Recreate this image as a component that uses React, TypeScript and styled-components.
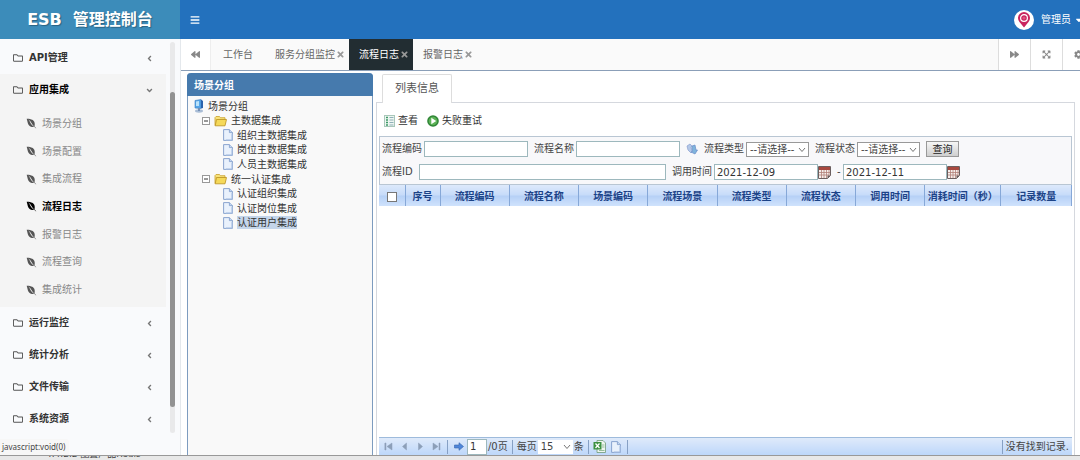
import React from 'react';
import styled, { createGlobalStyle, css } from 'styled-components';
import {
  FaAngleDown,
  FaAngleLeft,
  FaBackward,
  FaBars,
  FaCaretDown,
  FaCog,
  FaEnvira,
  FaExpandArrowsAlt,
  FaForward,
  FaRegFolder,
  FaTimes,
} from 'react-icons/fa';

const GlobalStyle = createGlobalStyle`
  * { box-sizing: border-box; }
  body {
    margin: 0;
    overflow: hidden;
    background: #fff;
    color: #444;
    font: 10px/14px "DejaVu Sans", "Noto Sans CJK SC", sans-serif;
  }
  button, input, select { font: inherit; color: inherit; margin: 0; }
  button { border: 0; padding: 0; background: none; cursor: pointer; }
  a { color: inherit; text-decoration: none; }
  ul { list-style: none; margin: 0; padding: 0; }
  svg { display: block; flex: none; }
`;

const Page = styled.div`
  display: flex;
  flex-direction: column;
  height: 100vh;
`;

/* ---------- header ---------- */

const Header = styled.header`
  display: flex;
  flex: none;
  height: 39px;
  overflow: hidden;
  background: #2371bd;
  color: #fff;
`;

const Brand = styled.h1`
  display: flex;
  align-items: center;
  justify-content: center;
  gap: 11px;
  width: 180px;
  margin: 0;
  background: #3c8cba;
  font-size: 16px;
  line-height: 24px;
  font-weight: 700;
  text-shadow: 1px 1px 1px rgba(0, 0, 0, 0.3);
`;

const MenuToggle = styled.button`
  padding: 0 10px;
`;

const UserMenu = styled.button`
  display: flex;
  align-items: center;
  gap: 7px;
  margin: 0 -4px 0 auto;
  white-space: nowrap;
`;

const UserName = styled.span`
  display: flex;
  align-items: center;
  gap: 3px;
`;

/* ---------- sidebar ---------- */

const Body = styled.div`
  display: flex;
  flex: 1;
  min-height: 0;
`;

const Sidebar = styled.aside`
  position: relative;
  display: flex;
  flex: none;
  width: 181px;
  padding-top: 3px;
  background: #f9fafc;
  border-right: 1px solid #e4e8ec;
`;

const Nav = styled.nav`
  width: 166px;
`;

const Group = styled.div<{ $open?: boolean }>`
  background: ${p => (p.$open ? '#f4f4f4' : 'transparent')};
  color: ${p => (p.$open ? '#000' : '#333')};
  padding-bottom: ${p => (p.$open ? 3 : 0)}px;
`;

const GroupLink = styled.a`
  display: flex;
  align-items: center;
  height: 32px;
  padding: 0 12px 0 13px;
  gap: 6px;
  font-weight: 700;

  svg:last-child {
    margin-left: auto;
    color: #777;
  }
`;

const SubMenu = styled.ul`
  display: grid;
  grid-auto-rows: 1fr;
  height: 198px;
  padding-top: 4px;
`;

const SubLink = styled.a<{ $active?: boolean }>`
  display: flex;
  align-items: center;
  gap: 5px;
  height: 100%;
  padding-left: 26px;
  color: ${p => (p.$active ? '#000' : '#888')};
  font-weight: ${p => (p.$active ? 700 : 400)};

  svg { color: ${p => (p.$active ? '#000' : '#555')}; }
`;

const ScrollTrack = styled.div`
  width: 5px;
  margin: 0 0 22px 4px;
  padding: 50px 0 26px;
  border-radius: 3px;
  background: #e9e9ea;
`;

const ScrollThumb = styled.div`
  height: 100%;
  border-radius: 3px;
  background: #929292;
`;

const LinkHint = styled.div`
  position: absolute;
  left: 0;
  bottom: 0;
  height: 16px;
  padding: 0 4px 0 2px;
  border-radius: 0 3px 0 0;
  background: #f7f7f7;
  color: #444;
  font: 8px/16px "Noto Sans", sans-serif;
`;

/* ---------- tab bar ---------- */

const Main = styled.main`
  display: flex;
  flex: 1;
  flex-direction: column;
  min-width: 0;
`;

const TabBar = styled.div`
  display: flex;
  flex: none;
  height: 32px;
  overflow: hidden;
  background: #fafafa;
  border-bottom: 1px solid #8b9fb8;
  color: #777;
`;

const BarButton = styled.button<{ $side: 'left' | 'right' }>`
  display: flex;
  flex: none;
  align-items: center;
  justify-content: center;
  width: ${p => (p.$side === 'left' ? 30 : 32)}px;
  background: #fff;
  color: #888;
  ${p => (p.$side === 'left' ? css`border-right: 1px solid #eee;` : css`border-left: 1px solid #ddd;`)}
`;

const BarEnd = styled.div`
  display: flex;
  flex: none;
  width: 82px;
  margin-left: auto;
  overflow: hidden;
`;

const Tab = styled.button<{ $active?: boolean }>`
  display: flex;
  align-items: center;
  gap: 1px;
  padding: 0 4px 0 10px;
  white-space: nowrap;
  background: ${p => (p.$active ? '#222d32' : 'transparent')};
  color: ${p => (p.$active ? '#fff' : '#666')};

  &:nth-child(2) { padding: 0 12px; }
  svg { color: #999; }
`;

/* ---------- tree panel ---------- */

const Workspace = styled.div`
  display: flex;
  flex: 1;
  gap: 3px;
  min-height: 0;
  padding: 2px 5px 0 6px;
`;

const TreePanel = styled.section`
  display: flex;
  flex: none;
  flex-direction: column;
  width: 186px;
  border: 1px solid #7d9cbf;
  border-width: 0 1px;
  border-radius: 4px 4px 0 0;
  background: #f9f9f9;
`;

const PanelTitle = styled.h2`
  flex: none;
  height: 23px;
  margin: 0 -1px 3px;
  padding: 0 7px;
  border-radius: 4px 4px 0 0;
  background: #467aad;
  color: #fff;
  font-size: 10px;
  line-height: 26px;
`;

const TreeList = styled.div`
  display: grid;
  grid-auto-rows: minmax(0, 1fr);
  height: 131px;
`;

const TreeRow = styled.div<{ $level: number }>`
  display: flex;
  align-items: center;
  padding-left: ${p => [5, 14, 35][p.$level]}px;
  gap: 4px;
`;

const TreeLabel = styled.span<{ $selected?: boolean }>`
  background: ${p => (p.$selected ? '#c4d5ea' : 'transparent')};
  line-height: 13px;
  color: #333;
`;

/* ---------- list panel ---------- */

const ListPanel = styled.section`
  display: flex;
  flex: 1;
  flex-direction: column;
  min-width: 0;
  padding-top: 1px;
`;

const PanelTab = styled.button`
  position: relative;
  flex: none;
  align-self: flex-start;
  height: 29px;
  margin: 0 0 -1px 6px;
  padding: 0 12px;
  border: 1px solid #ddd;
  border-bottom: 0;
  border-radius: 2px 2px 0 0;
  background: #fff;
  color: #555;
  font-size: 11px;
`;

const PanelBody = styled.div`
  display: flex;
  flex: 1;
  flex-direction: column;
  min-height: 0;
  padding: 0 2px;
  border: 1px solid #d5d8de;
  border-bottom: 0;
`;

const Toolbar = styled.div`
  display: flex;
  flex: none;
  align-items: center;
  gap: 9px;
  height: 33px;
  padding: 2px 5px 0;
`;

const ToolButton = styled.button`
  display: flex;
  align-items: center;
  gap: 3px;
  color: #333;
`;

const Filters = styled.form`
  display: flex;
  flex: none;
  flex-direction: column;
  gap: 7px;
  height: 49px;
  padding: 4px 2px 0;
  border: 1px solid #b9c6d3;
  background: #f8f8fa;
`;

const FilterRow = styled.div`
  display: flex;
  align-items: center;
  height: 16px;
  gap: 6px;
  white-space: nowrap;
`;

const Field = styled.div`
  display: flex;
  flex: none;
  align-items: center;
`;

const Label = styled.label<{ $wide?: number }>`
  width: ${p => p.$wide ?? 42}px;
  color: #444;
`;

const TextInput = styled.input<{ $width?: number }>`
  width: ${p => p.$width ?? 104}px;
  height: 16px;
  padding: 0 2px;
  border: 1px solid #9db8bd;
  background: #fff;
  color: #333;
`;

const SelectBox = styled.span<{ $plain?: boolean }>`
  display: grid;
  align-items: center;
  width: ${p => (p.$plain ? 35 : 63)}px;
  height: ${p => (p.$plain ? 14 : 15)}px;
  border: ${p => (p.$plain ? '0' : '1px solid #999')};
  background: #fff;

  select, svg { grid-area: 1 / 1; }
  select {
    width: 100%;
    height: 100%;
    padding: 0 0 0 3px;
    border: 0;
    background: none;
    appearance: none;
  }
  svg { justify-self: end; margin-right: 2px; pointer-events: none; }
`;

const IconButton = styled.button`
  display: flex;
  align-items: center;
`;

const QueryButton = styled.button`
  width: 33px;
  height: 16px;
  border: 1px solid #999;
  background: linear-gradient(#f6f6f6, #cfcfcf);
  line-height: 13px;
  color: #222;
`;

const Grid = styled.table`
  flex: none;
  width: 100%;
  table-layout: fixed;
  border-collapse: collapse;

  th {
    height: 21px;
    padding: 2px 0 0;
    border-right: 1px solid #86a8d8;
    background: linear-gradient(#dde9fb, #c6dbf9 48%, #b5d0f6 52%, #cfe2fc);
    color: #1c4388;
    white-space: nowrap;
  }
  input {
    display: block;
    appearance: none;
    width: 10px;
    height: 10px;
    margin: 0 auto;
    border: 1px solid #777;
    background: #fff;
  }
`;

const Pager = styled.footer`
  display: flex;
  flex: none;
  align-items: center;
  height: 18px;
  margin-top: auto;
  padding: 0 3px 0 1px;
  border-top: 1px solid #9ebbdc;
  background: linear-gradient(#dfeafa, #bdd7fa);
  white-space: nowrap;
`;

const PageButton = styled.button`
  display: grid;
  place-items: center;
  width: 16px;
  height: 14px;
`;

const Divider = styled.i`
  width: 1px;
  height: 14px;
  margin: 0 3px;
  background: #86a0c4;
`;

const PagerText = styled.label`
  margin: 0 1px;
`;

const PagerNote = styled.span`
  display: flex;
  align-items: center;
  margin-left: auto;
`;

/* strip of the window underneath */
const BottomStrip = styled.div`
  display: flex;
  flex: none;
  align-items: flex-end;
  height: 5px;
  padding-left: 46px;
  overflow: hidden;
  border-top: 1px solid #999;
  background: #e8e8e8;
  color: #444;
  font-size: 9px;
  line-height: 11px;
`;

/* ---------- drawings ---------- */

const PinAvatar = () => (
  <svg width="20" height="20" viewBox="0 0 20 20">
    <circle cx="10" cy="10" r="10" fill="#fff" />
    <path d="M10 17.500 5.500 12A6 6 0 1 1 14.500 12Z" fill="#c9245f" />
    <circle cx="10" cy="8" r="3.400" fill="none" stroke="#fff" strokeWidth="1.200" />
    <circle cx="10" cy="8" r="1.600" fill="#e2527f" />
  </svg>
);

const ServerIcon = () => (
  <svg width="11" height="14" viewBox="0 0 11 14">
    <path d="M2 1.500 8 .500v9L2 9Z" fill="#56a6e8" stroke="#3a7cc0" strokeWidth=".6" />
    <path d="M3 2.500 6 2v5L3 7Z" fill="#b9e2fb" />
    <path d="M8 .500 10 2v7L8 9.500Z" fill="#2b63ac" />
    <ellipse cx="6" cy="12" rx="4" ry="1.700" fill="#a9bdd6" />
    <path d="M5 9h2v3H5Z" fill="#7590b5" />
  </svg>
);

const MinusBox = () => (
  <svg width="8" height="8" viewBox="0 0 8 8">
    <rect x=".5" y=".5" width="7" height="7" fill="#fff" stroke="#999" />
    <path d="M2 4h4" stroke="#333" />
  </svg>
);

const OpenFolder = () => (
  <svg width="13" height="12" viewBox="0 0 13 12">
    <path d="M1 10.500V2.500L2 1.500h3.500l1 1.200H11V5" fill="#f7e27a" stroke="#c8a02c" strokeWidth=".8" />
    <path d="M1.200 10.800 2.500 4.500h10l-1.500 6.300Z" fill="#f5d95a" stroke="#b98f1e" strokeWidth=".8" />
  </svg>
);

const FileIcon = () => (
  <svg width="10" height="12" viewBox="0 0 10 12">
    <path d="M.6.600h5.800L9.400 3.600v7.800H.6Z" fill="#e9f1fc" stroke="#7f9cc9" strokeWidth=".9" />
    <path d="M6.400.600v3h3" fill="#c3d6f2" stroke="#7f9cc9" strokeWidth=".8" />
    <path d="M9 5v6H3" fill="none" stroke="#a9c0e4" />
  </svg>
);

const ListIcon = () => (
  <svg width="11" height="12" viewBox="0 0 11 12">
    <rect x=".5" y=".5" width="10" height="11" fill="#eef6f1" stroke="#a9c7ba" />
    <path d="M2 2.500h2M2 5h2M2 7.500h2M2 10h2" stroke="#3e9a68" strokeWidth="1.300" />
    <path d="M5.500 2.500h4M5.500 5h4M5.500 7.500h4M5.500 10h4" stroke="#8fb0b8" />
  </svg>
);

const PlayIcon = () => (
  <svg width="12" height="12" viewBox="0 0 12 12">
    <circle cx="6" cy="6" r="5.800" fill="#2f8536" />
    <circle cx="6" cy="6" r="4.300" fill="#5cb256" />
    <path d="M4.300 2.800 9.200 6 4.300 9.200Z" fill="#fff" />
  </svg>
);

const RefreshIcon = () => (
  <svg width="12" height="12" viewBox="0 0 12 12">
    <path d="M1 3 4 1l2 2-1 1 1 4-1 2-3-3Z" fill="#b4c8e8" stroke="#8a9fd0" strokeWidth=".7" />
    <path d="m6 3 3-1 1 5 1.500 0-2.500 4-4-2 1.500-.5Z" fill="#7fb4dc" stroke="#6a8cc8" strokeWidth=".7" />
  </svg>
);

const CalendarIcon = () => (
  <svg width="13" height="13" viewBox="0 0 13 13">
    <path d="M.5.500h12v9l-3 3h-9Z" fill="#f6efec" stroke="#6b5f5f" />
    <path d="M1 1h11v3H1Z" fill="#a8493f" />
    <path d="M1 6.500h11M1 9h10M3.500 4v8M6 4v8M8.500 4v8M11 4v6" stroke="#b28078" strokeWidth=".8" />
    <path d="M9.500 12.500v-3h3Z" fill="#6b5f5f" />
  </svg>
);

const Chevron = () => (
  <svg width="8" height="6" viewBox="0 0 8 6">
    <path d="m1 1 3 3.500L7 1" fill="none" stroke="#666" strokeWidth=".9" />
  </svg>
);

const NavGlyph = ({ d }: { d: string }) => (
  <svg width="9" height="9" viewBox="0 0 9 9">
    <path d={d} fill="#8c9fb8" stroke="#8c9fb8" strokeWidth=".5" />
  </svg>
);

const GoArrow = () => (
  <svg width="10" height="9" viewBox="0 0 10 9">
    <path d="M.5 3H5V.700L9.500 4.500 5 8.300V6H.5Z" fill="#4f86d9" stroke="#3565ad" strokeWidth=".6" />
  </svg>
);

const ExcelIcon = () => (
  <svg width="13" height="13" viewBox="0 0 13 13">
    <path d="M4 .500h6L12.500 3v9.500H4Z" fill="#eef5ee" stroke="#6f9a78" strokeWidth=".8" />
    <path d="M9 5h2.500M9 7h2.500M6 10.500h5.500" stroke="#7fae86" strokeWidth=".8" />
    <rect x=".5" y="2" width="8" height="7.500" fill="#3d9142" />
    <path d="m2.500 3.500 4 4.500M6.500 3.500l-4 4.500" stroke="#fff" strokeWidth="1.300" />
  </svg>
);

/* ---------- data ---------- */

const subItems = ['场景分组', '场景配置', '集成流程', '流程日志', '报警日志', '流程查询', '集成统计'];
const closedGroups = ['运行监控', '统计分析', '文件传输', '系统资源'];

const tabs = [
  { name: '工作台', closable: false },
  { name: '服务分组监控', closable: true },
  { name: '流程日志', closable: true },
  { name: '报警日志', closable: true },
];

const tree = [
  { name: '场景分组', level: 0 },
  { name: '主数据集成', level: 1 },
  { name: '组织主数据集成', level: 2 },
  { name: '岗位主数据集成', level: 2 },
  { name: '人员主数据集成', level: 2 },
  { name: '统一认证集成', level: 1 },
  { name: '认证组织集成', level: 2 },
  { name: '认证岗位集成', level: 2 },
  { name: '认证用户集成', level: 2 },
];

const columns = [
  { name: '序号', width: '35px' },
  { name: '流程编码', width: '10%' },
  { name: '流程名称', width: '10%' },
  { name: '场景编码', width: '10%' },
  { name: '流程场景', width: '10%' },
  { name: '流程类型', width: '10%' },
  { name: '流程状态', width: '10%' },
  { name: '调用时间', width: '10%' },
  { name: '消耗时间（秒）', width: '11%' },
  { name: '记录数量', width: 'auto' },
];

const pageButtons = [
  { name: '首页', d: 'M1 1v7M2 1v7H1V1ZM8 1v7L3 4.500Z' },
  { name: '上一页', d: 'M6.500 1v7l-4-3.500Z' },
  { name: '下一页', d: 'M2.500 1v7l4-3.500Z' },
  { name: '末页', d: 'M1 1v7l5-3.500ZM7 1h1v7H7Z' },
];

const MenuGroup = ({ name, open, children }: { name: string; open?: boolean; children?: React.ReactNode }) => (
  <Group $open={open}>
    <GroupLink href="#">
      <FaRegFolder size={10} color="#555" />
      {name}
      {open ? <FaAngleDown size={9} /> : <FaAngleLeft size={9} />}
    </GroupLink>
    {children}
  </Group>
);

const Choice = ({ id }: { id: string }) => (
  <SelectBox>
    <select id={id}>
      <option>--请选择--</option>
    </select>
    <Chevron />
  </SelectBox>
);

export default function App() {
  return (
    <Page>
      <GlobalStyle />
      <Header>
        <Brand>
          <span>ESB</span>
          <span>管理控制台</span>
        </Brand>
        <MenuToggle aria-label="菜单">
          <FaBars size={10} />
        </MenuToggle>
        <UserMenu>
          <PinAvatar />
          <UserName>
            管理员
            <FaCaretDown size={10} />
          </UserName>
        </UserMenu>
      </Header>

      <Body>
        <Sidebar>
          <Nav>
            <MenuGroup name="API管理" />
            <MenuGroup name="应用集成" open>
              <SubMenu>
                {subItems.map(name => (
                  <li key={name}>
                    <SubLink href="#" $active={name === '流程日志'}>
                      <FaEnvira size={11} />
                      {name}
                    </SubLink>
                  </li>
                ))}
              </SubMenu>
            </MenuGroup>
            {closedGroups.map(name => (
              <MenuGroup key={name} name={name} />
            ))}
          </Nav>
          <ScrollTrack>
            <ScrollThumb />
          </ScrollTrack>
          <LinkHint>javascript:void(0)</LinkHint>
        </Sidebar>

        <Main>
          <TabBar>
            <BarButton $side="left" aria-label="向左">
              <FaBackward size={9} />
            </BarButton>
            {tabs.map(tab => (
              <Tab key={tab.name} $active={tab.name === '流程日志'}>
                {tab.name}
                {tab.closable && <FaTimes size={9} />}
              </Tab>
            ))}
            <BarEnd>
              <BarButton $side="right" aria-label="向右">
                <FaForward size={9} />
              </BarButton>
              <BarButton $side="right" aria-label="全屏">
                <FaExpandArrowsAlt size={9} />
              </BarButton>
              <BarButton $side="right" aria-label="设置">
                <FaCog size={9} />
              </BarButton>
            </BarEnd>
          </TabBar>

          <Workspace>
            <TreePanel>
              <PanelTitle>场景分组</PanelTitle>
              <TreeList>
                {tree.map(node => (
                  <TreeRow key={node.name} $level={node.level}>
                    {node.level === 0 && <ServerIcon />}
                    {node.level === 1 && <MinusBox />}
                    {node.level === 1 && <OpenFolder />}
                    {node.level === 2 && <FileIcon />}
                    <TreeLabel $selected={node.name === '认证用户集成'}>{node.name}</TreeLabel>
                  </TreeRow>
                ))}
              </TreeList>
            </TreePanel>

            <ListPanel>
              <PanelTab>列表信息</PanelTab>
              <PanelBody>
                <Toolbar>
                  <ToolButton>
                    <ListIcon />
                    查看
                  </ToolButton>
                  <ToolButton>
                    <PlayIcon />
                    失败重试
                  </ToolButton>
                </Toolbar>

                <Filters onSubmit={e => e.preventDefault()}>
                  <FilterRow>
                    <Field>
                      <Label htmlFor="code">流程编码</Label>
                      <TextInput id="code" />
                    </Field>
                    <Field>
                      <Label htmlFor="name">流程名称</Label>
                      <TextInput id="name" />
                    </Field>
                    <IconButton type="button" aria-label="选择流程">
                      <RefreshIcon />
                    </IconButton>
                    <Field>
                      <Label htmlFor="type">流程类型</Label>
                      <Choice id="type" />
                    </Field>
                    <Field>
                      <Label htmlFor="state">流程状态</Label>
                      <Choice id="state" />
                    </Field>
                    <QueryButton>查询</QueryButton>
                  </FilterRow>
                  <FilterRow>
                    <Field>
                      <Label htmlFor="pid" $wide={37}>流程ID</Label>
                      <TextInput id="pid" $width={247} />
                    </Field>
                    <Field>
                      <Label htmlFor="from">调用时间</Label>
                      <TextInput id="from" defaultValue="2021-12-09" />
                      <IconButton type="button" aria-label="开始日期">
                        <CalendarIcon />
                      </IconButton>
                    </Field>
                    <Field>
                      <Label htmlFor="to" $wide={6}>-</Label>
                      <TextInput id="to" defaultValue="2021-12-11" />
                      <IconButton type="button" aria-label="结束日期">
                        <CalendarIcon />
                      </IconButton>
                    </Field>
                  </FilterRow>
                </Filters>

                <Grid>
                  <colgroup>
                    <col style={{ width: '26px' }} />
                    {columns.map(col => (
                      <col key={col.name} style={{ width: col.width }} />
                    ))}
                  </colgroup>
                  <thead>
                    <tr>
                      <th>
                        <input type="checkbox" aria-label="全选" />
                      </th>
                      {columns.map(col => (
                        <th key={col.name}>{col.name}</th>
                      ))}
                    </tr>
                  </thead>
                </Grid>

                <Pager>
                  {pageButtons.map(b => (
                    <PageButton key={b.name} aria-label={b.name}>
                      <NavGlyph d={b.d} />
                    </PageButton>
                  ))}
                  <Divider />
                  <PageButton aria-label="跳转">
                    <GoArrow />
                  </PageButton>
                  <TextInput id="page" aria-label="页码" $width={20} defaultValue="1" />
                  <PagerText htmlFor="page">/0页</PagerText>
                  <Divider />
                  <PagerText htmlFor="size">每页</PagerText>
                  <SelectBox $plain>
                    <select id="size">
                      <option>15</option>
                    </select>
                    <Chevron />
                  </SelectBox>
                  <PagerText htmlFor="size">条</PagerText>
                  <Divider />
                  <PageButton aria-label="导出表格">
                    <ExcelIcon />
                  </PageButton>
                  <PageButton aria-label="导出文件">
                    <FileIcon />
                  </PageButton>
                  <Divider />
                  <PagerNote>
                    <Divider />
                    没有找到记录.
                  </PagerNote>
                </Pager>
              </PanelBody>
            </ListPanel>
          </Workspace>
        </Main>
      </Body>
      <BottomStrip>4.4.2.2 配置产品Redis</BottomStrip>
    </Page>
  );
}
